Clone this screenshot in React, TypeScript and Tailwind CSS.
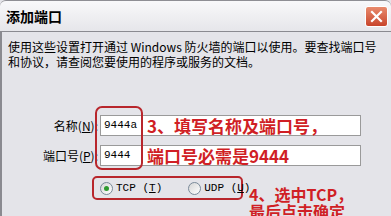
import React from 'react';

const song = { fontFamily: '"Noto Sans CJK SC", "DejaVu Sans", sans-serif' };
const mono = { fontFamily: '"Liberation Mono", "DejaVu Sans Mono", monospace' };

function Radio({ checked }: { checked?: boolean }) {
  return (
    <span className="relative inline-flex h-[13px] w-[13px] shrink-0 items-center justify-center rounded-full border border-[#7a8a99] bg-gradient-to-br from-[#d6d6d6] to-white">
      {checked && <span className="h-[5px] w-[5px] rounded-full bg-[#2f9a2f]" />}
    </span>
  );
}

function Field({ label, hotkey, value, note }: { label: string; hotkey: string; value: string; note: string }) {
  return (
    <div className="flex items-center">
      <div className="w-[98px] pr-[2px] text-right text-[12px] text-black" style={song}>
        {label}(<span className="underline">{hotkey}</span>):
      </div>
      <div className="flex h-[21px] w-[261px] items-center border border-[#9a9a9a] bg-white">
        <span className="w-[46px] pl-[3px] text-[11px] text-black" style={mono}>{value}</span>
        <span className="whitespace-nowrap text-[17px] font-bold leading-none text-[#d01f25]" style={song}>{note}</span>
      </div>
    </div>
  );
}

export default function App() {
  return (
    <div className="relative h-[216px] w-[391px] overflow-hidden bg-[#e4e4e9]">
      {/* title bar */}
      <div className="flex h-[31px] items-center justify-between rounded-t-[6px] border-t border-[#8e8e94] bg-gradient-to-b from-[#f8f8fa] to-[#e6e6ea] pl-[6px] pr-[3px]">
        <span className="text-[14px] font-bold text-black" style={song}>添加端口</span>
        <span className="flex h-[21px] w-[23px] items-center justify-center rounded-[3px] border border-white bg-gradient-to-b from-[#e88a6c] to-[#c8442b]">
          <svg width="13" height="13" viewBox="0 0 13 13">
            <path d="M2 2 L11 11 M11 2 L2 11" stroke="white" strokeWidth="2.2" strokeLinecap="square" />
          </svg>
        </span>
      </div>

      {/* body */}
      <div className="h-[185px] border-l-2 border-t border-[#8a8a90] pt-[7px]">
        <p className="pl-[6px] text-[12px] leading-[15px] text-black" style={song}>
          使用这些设置打开通过 Windows 防火墙的端口以使用。要查找端口号
          <br />
          和协议，请查阅您要使用的程序或服务的文档。
        </p>

        <div className="mt-[46px] flex flex-col gap-[9px]">
          <Field label="名称" hotkey="N" value="9444a" note="3、填写名称及端口号，" />
          <Field label="端口号" hotkey="P" value="9444" note="端口号必需是9444" />
        </div>

        <div className="mt-[10px] flex items-start">
          <div className="ml-[90px] flex h-[24px] w-[151px] items-center whitespace-nowrap rounded-[5px] border-2 border-[#b8262c] pl-[6px] text-[11px] text-black" style={mono}>
            <Radio checked />
            <span className="ml-[3px]">TCP (<span className="underline">T</span>)</span>
            <span className="ml-[26px] flex"><Radio /></span>
            <span className="ml-[3px]">UDP (<span className="underline">U</span>)</span>
          </div>
          <div className="ml-[6px] mt-[10px] whitespace-nowrap text-[16px] font-bold leading-[17px] text-[#d01f25]" style={song}>
            4、选中TCP，
            <br />
            最后点击确定
          </div>
        </div>
      </div>

      {/* red highlight round inputs */}
      <div className="absolute left-[95px] top-[106px] h-[64px] w-[48px] rounded-[7px] border-2 border-[#b8262c]" />
    </div>
  );
}
